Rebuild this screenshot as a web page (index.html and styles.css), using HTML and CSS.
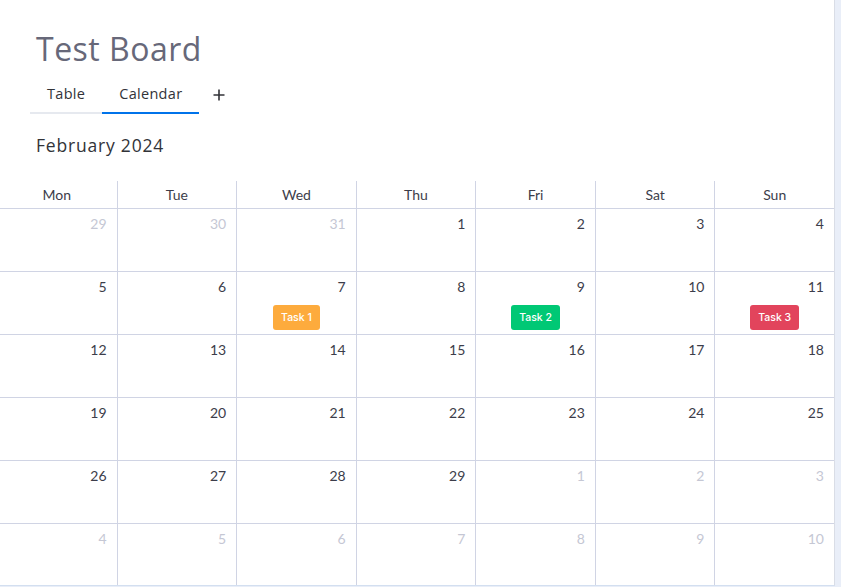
FILE: index.html
```html
<!DOCTYPE html>
<html>
<head>
<meta charset="utf-8">
<link rel="stylesheet" href="styles.css">
</head>
<body>
<div class="page">
  <header class="board-head">
    <h1 class="title">Test Board</h1>
    <nav class="tabs">
      <div class="tab">Table</div>
      <div class="tab active">Calendar</div>
      <div class="tab-add">
        <svg width="12" height="12" viewBox="0 0 12 12"><path d="M6 0.5V11.5M0.5 6H11.5" stroke="#323338" stroke-width="1.6" fill="none"/></svg>
      </div>
    </nav>
    <div class="month">February 2024</div>
  </header>
  <section class="calendar">
    <div class="dow">
      <div>Mon</div><div>Tue</div><div>Wed</div><div>Thu</div><div>Fri</div><div>Sat</div><div>Sun</div>
    </div>
    <div class="week">
      <div class="day other"><span class="num">29</span></div>
      <div class="day other"><span class="num">30</span></div>
      <div class="day other"><span class="num">31</span></div>
      <div class="day"><span class="num">1</span></div>
      <div class="day"><span class="num">2</span></div>
      <div class="day"><span class="num">3</span></div>
      <div class="day"><span class="num">4</span></div>
    </div>
    <div class="week">
      <div class="day"><span class="num">5</span></div>
      <div class="day"><span class="num">6</span></div>
      <div class="day"><span class="num">7</span><span class="task orange">Task 1</span></div>
      <div class="day"><span class="num">8</span></div>
      <div class="day"><span class="num">9</span><span class="task green">Task 2</span></div>
      <div class="day"><span class="num">10</span></div>
      <div class="day"><span class="num">11</span><span class="task red">Task 3</span></div>
    </div>
    <div class="week">
      <div class="day"><span class="num">12</span></div>
      <div class="day"><span class="num">13</span></div>
      <div class="day"><span class="num">14</span></div>
      <div class="day"><span class="num">15</span></div>
      <div class="day"><span class="num">16</span></div>
      <div class="day"><span class="num">17</span></div>
      <div class="day"><span class="num">18</span></div>
    </div>
    <div class="week">
      <div class="day"><span class="num">19</span></div>
      <div class="day"><span class="num">20</span></div>
      <div class="day"><span class="num">21</span></div>
      <div class="day"><span class="num">22</span></div>
      <div class="day"><span class="num">23</span></div>
      <div class="day"><span class="num">24</span></div>
      <div class="day"><span class="num">25</span></div>
    </div>
    <div class="week">
      <div class="day"><span class="num">26</span></div>
      <div class="day"><span class="num">27</span></div>
      <div class="day"><span class="num">28</span></div>
      <div class="day"><span class="num">29</span></div>
      <div class="day other"><span class="num">1</span></div>
      <div class="day other"><span class="num">2</span></div>
      <div class="day other"><span class="num">3</span></div>
    </div>
    <div class="week last">
      <div class="day other"><span class="num">4</span></div>
      <div class="day other"><span class="num">5</span></div>
      <div class="day other"><span class="num">6</span></div>
      <div class="day other"><span class="num">7</span></div>
      <div class="day other"><span class="num">8</span></div>
      <div class="day other"><span class="num">9</span></div>
      <div class="day other"><span class="num">10</span></div>
    </div>
  </section>
</div>
</body>
</html>
```

FILE: styles.css
```css
html, body {
  margin: 0;
  padding: 0;
}
body {
  background: #e9eef8;
  width: 841px;
  height: 587px;
  overflow: hidden;
  font-family: "Lato", "Inter", sans-serif;
  color: #323338;
}
.page {
  width: 834px;
  height: 585px;
  background: #ffffff;
  border-right: 1px solid #d9dde6;
  border-bottom: 1px solid #d3dff0;
  overflow: hidden;
}
.board-head {
  padding-top: 28px;
}
.title {
  margin: 0 0 0 36px;
  font-family: "Open Sans", sans-serif;
  font-weight: 500;
  font-size: 32px;
  line-height: 42px;
  color: #676879;
  letter-spacing: 0.5px;
}
.tabs {
  display: flex;
  align-items: center;
  margin-left: 30px;
  margin-top: 10px;
  height: 34px;
}
.tab {
  height: 32px;
  line-height: 28px;
  padding: 0 17px;
  font-family: "Open Sans", sans-serif;
  font-size: 14.5px;
  letter-spacing: 0.3px;
  color: #323338;
  border-bottom: 2px solid #e6e9ef;
}
.tab.active {
  border-bottom-color: #0073ea;
}
.tab-add {
  margin-left: 14px;
  height: 34px;
  display: flex;
  align-items: center;
  padding-bottom: 4px;
  box-sizing: border-box;
}
.month {
  margin: 19px 0 0 36px;
  font-family: "Open Sans", sans-serif;
  font-size: 17.5px;
  letter-spacing: 0.8px;
  line-height: 24px;
  color: #323338;
}
.calendar {
  margin-top: 24px;
  margin-left: -3px;
  width: 837px;
}
.dow {
  display: grid;
  grid-template-columns: repeat(7, 1fr);
  height: 27px;
  border-bottom: 1px solid #d0d4e4;
}
.dow div {
  text-align: center;
  font-size: 14px;
  line-height: 28px;
  color: #3c3d4a;
  border-left: 1px solid #d0d4e4;
}
.dow div:first-child {
  border-left: none;
}
.week {
  display: grid;
  grid-template-columns: repeat(7, 1fr);
  height: 62px;
  border-bottom: 1px solid #d0d4e4;
}
.week.last {
  border-bottom: none;
}
.day {
  border-left: 1px solid #d0d4e4;
  display: flex;
  flex-direction: column;
  align-items: center;
  padding-top: 6px;
}
.day:first-child {
  border-left: none;
}
.num {
  align-self: flex-end;
  margin-right: 10px;
  font-size: 14px;
  line-height: 18px;
  color: #3c3d4a;
}
.day.other .num {
  color: #c5c7d4;
}
.task {
  margin-top: 9px;
  height: 25px;
  padding: 0 8px;
  line-height: 25px;
  border-radius: 3px;
  font-family: "Inter", sans-serif;
  font-weight: 500;
  font-size: 10.5px;
  color: #ffffff;
}
.orange { background: #fdab3d; }
.green { background: #00c875; }
.red { background: #e2445c; }
```
